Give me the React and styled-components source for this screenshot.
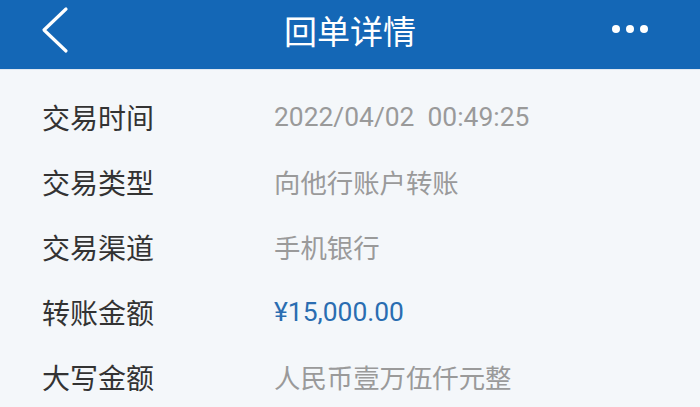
import React from 'react';
import styled, { createGlobalStyle } from 'styled-components';

const GlobalStyle = createGlobalStyle`
    html, body {
        margin: 0;
        padding: 0;
        background: #f4f7fa;
    }
    body {
        font-family: Roboto, "Noto Sans CJK SC", sans-serif;
    }
`;

const rows = [
    { label: '交易时间', value: '2022/04/02\u00a0\u00a000:49:25' },
    { label: '交易类型', value: '向他行账户转账' },
    { label: '交易渠道', value: '手机银行' },
    { label: '转账金额', value: '¥15,000.00', highlight: true },
    { label: '大写金额', value: '人民币壹万伍仟元整' },
];

const App = () => {
    return (
        <Page>
            <GlobalStyle />
            <Header>
                <BackButton aria-label="返回">
                    <svg width="30" height="48" viewBox="0 0 30 48" fill="none">
                        <path d="M26 3 L4 24 L26 45" stroke="#fff" strokeWidth="3.2" strokeLinecap="round" strokeLinejoin="round" />
                    </svg>
                </BackButton>
                <Title>回单详情</Title>
                <MoreButton aria-label="更多">
                    <Dot />
                    <Dot />
                    <Dot />
                </MoreButton>
            </Header>
            <List>
                {rows.map((row) => (
                    <Row key={row.label}>
                        <Label>{row.label}</Label>
                        <Value $highlight={row.highlight}>{row.value}</Value>
                    </Row>
                ))}
            </List>
        </Page>
    );
};

const Page = styled.div`
    width: 700px;
    height: 407px;
    overflow: hidden;
    background: #f4f7fa;
`;

const Header = styled.div`
    position: relative;
    display: flex;
    align-items: center;
    justify-content: space-between;
    height: 70px;
    padding: 0 52px 0 40px;
    box-sizing: border-box;
    background: #1467b6;
    border-bottom: 1px solid #dfe8f2;
`;

const BackButton = styled.div`
    display: flex;
    align-items: center;
    width: 30px;
    height: 48px;
    margin-top: -10px;
`;

const Title = styled.div`
    position: absolute;
    left: 0;
    right: 0;
    top: 0;
    bottom: 0;
    display: flex;
    align-items: center;
    justify-content: center;
    padding-bottom: 10px;
    color: #fff;
    font-size: 33px;
    font-family: "Noto Sans CJK SC", sans-serif;
    pointer-events: none;
`;

const MoreButton = styled.div`
    display: flex;
    gap: 6px;
    margin-top: -12px;
`;

const Dot = styled.span`
    width: 8px;
    height: 8px;
    border-radius: 50%;
    background: #fff;
`;

const List = styled.div`
    display: flex;
    flex-direction: column;
    padding: 14px 0 0 42px;
`;

const Row = styled.div`
    display: flex;
    align-items: center;
    height: 65px;
`;

const Label = styled.div`
    width: 232px;
    font-size: 28px;
    color: #333;
    font-family: "Noto Sans CJK SC", sans-serif;
`;

const Value = styled.div`
    font-size: 26.4px;
    color: ${(props) => (props.$highlight ? '#2a6db1' : '#9a9a9a')};
    font-family: Roboto, "Noto Sans CJK SC", sans-serif;
`;

export default App;
